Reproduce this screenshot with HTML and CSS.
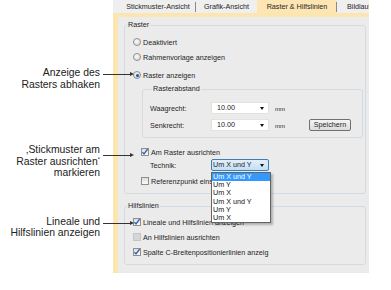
FILE: index.html
```html
<!DOCTYPE html>
<html lang="de">
<head>
    <meta charset="UTF-8">
    <meta name="viewport" content="width=device-width, initial-scale=1.0">
    <title>Raster &amp; Hilfslinien</title>
    <link rel="stylesheet" href="styles.css">
</head>
<body>
    <div class="figure">
        <!-- Beschriftungen links -->
        <div class="notes">
            <p class="note note-grid">Anzeige des<br>Rasters abhaken<span class="arrow"></span></p>
            <p class="note note-snap">‚Stickmuster am<br>Raster ausrichten‘<br>markieren<span class="arrow"></span></p>
            <p class="note note-guides">Lineale und<br>Hilfslinien anzeigen<span class="arrow"></span></p>
        </div>

        <div class="dialog">
            <div class="tabs">
                <div class="tab tab-design">Stickmuster-Ansicht</div>
                <div class="tab tab-art">Grafik-Ansicht</div>
                <div class="tab tab-grid active">Raster &amp; Hilfslinien</div>
                <div class="tab tab-scroll">Bildlauf</div>
            </div>

            <div class="page">
                <fieldset class="group group-raster">
                    <legend>Raster</legend>
                    <div class="row opt first"><span class="radio"></span>Deaktiviert</div>
                    <div class="row opt second"><span class="radio"></span>Rahmenvorlage anzeigen</div>
                    <div class="row opt third"><span class="radio on"></span>Raster anzeigen</div>

                    <fieldset class="group group-spacing">
                        <legend>Rasterabstand</legend>
                        <div class="field first">
                            <span class="field-label">Waagrecht:</span>
                            <span class="input">10.00<span class="caret"></span></span>
                            <span class="unit">mm</span>
                        </div>
                        <div class="field second">
                            <span class="field-label">Senkrecht:</span>
                            <span class="input">10.00<span class="caret"></span></span>
                            <span class="unit">mm</span>
                            <span class="button">Speichern</span>
                        </div>
                    </fieldset>

                    <div class="row snap"><span class="check on"><svg width="8" height="8" viewBox="0 0 8 8"><polyline points="1.4,4.2 3,6 6.6,1.2" fill="none" stroke="#2c5fae" stroke-width="1.3"/></svg></span>Am Raster ausrichten</div>
                    <div class="field technik">
                        <span class="field-label">Technik:</span>
                        <span class="combo">Um X und Y<span class="caret"></span>
                            <span class="list">
                                <span class="item selected">Um X und Y</span>
                                <span class="item">Um Y</span>
                                <span class="item">Um X</span>
                                <span class="item">Um X und Y</span>
                                <span class="item">Um Y</span>
                                <span class="item">Um X</span>
                            </span>
                        </span>
                    </div>
                    <div class="row snap ref"><span class="check"></span><span class="clipped">Referenzpunkt einstellen</span></div>
                </fieldset>

                <fieldset class="group group-guides">
                    <legend>Hilfslinien</legend>
                    <div class="row opt first2"><span class="check on"><svg width="8" height="8" viewBox="0 0 8 8"><polyline points="1.4,4.2 3,6 6.6,1.2" fill="none" stroke="#2c5fae" stroke-width="1.3"/></svg></span>Lineale und Hilfslinien anzeigen</div>
                    <div class="row opt second"><span class="check off"></span>An Hilfslinien ausrichten</div>
                    <div class="row opt second"><span class="check on"><svg width="8" height="8" viewBox="0 0 8 8"><polyline points="1.4,4.2 3,6 6.6,1.2" fill="none" stroke="#2c5fae" stroke-width="1.3"/></svg></span>Spalte C-Breitenpositionierlinien anzeig</div>
                </fieldset>
            </div>
        </div>
    </div>
</body>
</html>
```

FILE: styles.css
```css
* {
    margin: 0;
    padding: 0;
    box-sizing: border-box;
}
body {
    background: white;
    width: 391px;
    height: 290px;
    overflow: hidden;
}
.figure {
    display: flex;
    align-items: flex-start;
}
/* Beschriftungen */
.notes {
    width: 113px;
    flex-shrink: 0;
    padding-top: 67px;
    position: relative;
    z-index: 2;
}
.note {
    position: relative;
    text-align: right;
    padding-right: 13px;
    font-family: "Liberation Sans", Arial, sans-serif;
    font-size: 10.4px;
    line-height: 11.5px;
    color: #222;
}
.note-snap {
    margin-top: 54px;
}
.note-guides {
    margin-top: 37px;
}
.arrow {
    position: absolute;
    left: 103px;
    top: 7px;
    width: 27px;
    height: 1px;
    background: #333;
}
.arrow::after {
    content: "";
    position: absolute;
    right: -4px;
    top: -2px;
    border-left: 4px solid #333;
    border-top: 2.5px solid transparent;
    border-bottom: 2.5px solid transparent;
}
.note-snap .arrow {
    top: 11px;
}
/* Dialog */
.dialog {
    width: 256px;
    height: 273px;
    font-family: "Liberation Sans", Arial, sans-serif;
    font-size: 7.2px;
    color: #1e1e1e;
    display: flex;
    flex-direction: column;
}
.tabs {
    display: flex;
    height: 13px;
    background: #efefef;
}
.tab {
    position: relative;
    line-height: 13px;
    text-align: center;
    white-space: nowrap;
    overflow: hidden;
}
.tab-design {
    width: 83px;
    padding-left: 7px;
}
.tab-art {
    width: 61px;
}
.tab-grid {
    width: 80px;
}
.tab-scroll {
    width: 32px;
    padding-left: 10px;
    text-align: left;
}
.tab-design::after,
.tab-grid::after {
    content: "";
    position: absolute;
    right: 0;
    top: 2px;
    height: 10px;
    width: 1px;
    background: #8a8a8a;
}
.tab.active {
    background: #fde6b3;
}
.page {
    flex: 1;
    background: #ebebeb;
    border-left: 5px solid #fbe5b1;
    border-top: 4px solid #fbe5b1;
    padding-top: 4px;
}
.group {
    border: 1px solid #d3dbe0;
    border-radius: 3px;
    min-width: 0;
}
.group legend {
    margin-left: 2px;
    padding: 0 1px;
    line-height: 8px;
}
.group-raster {
    margin-left: 6px;
    width: 242px;
    padding-bottom: 7px;
}
.group-spacing {
    margin: 5px 0 0 17px;
    width: 221px;
    padding: 0 0 6px 7px;
}
.group-guides {
    margin: 8px 0 0 6px;
    width: 242px;
    padding-bottom: 7px;
}
.row {
    display: flex;
    align-items: center;
    height: 10px;
    white-space: nowrap;
}
.opt {
    padding-left: 8px;
    margin-top: 5px;
}
.opt.first {
    margin-top: 8px;
}
.opt.third {
    margin-top: 8px;
}
.opt.first2 {
    margin-top: 7px;
}
.radio {
    width: 8px;
    height: 8px;
    border-radius: 50%;
    border: 1px solid #8e8f8f;
    background: radial-gradient(circle at 40% 35%, #fafafa, #d4d4d4);
    margin-right: 2px;
    position: relative;
}
.radio.on::after {
    content: "";
    position: absolute;
    left: 1.5px;
    top: 1.5px;
    width: 3px;
    height: 3px;
    border-radius: 50%;
    background: #1d64b4;
    box-shadow: 0 0 1px #6aa7e6;
}
.check {
    width: 8px;
    height: 8px;
    border: 1px solid #8e8f8f;
    background: linear-gradient(#dcdcdc, #fbfbfb);
    margin-right: 2px;
    display: flex;
    align-items: center;
    justify-content: center;
}
.check svg {
    display: block;
    flex-shrink: 0;
}
.check.off {
    background: #d6d6d6;
    border-color: #c4c4c4;
}
.snap {
    margin: 9px 0 0 16px;
}
.snap.ref {
    margin-top: 5px;
}
.clipped {
    width: 60px;
    overflow: hidden;
}
.field {
    display: flex;
    align-items: center;
    height: 12px;
}
.field.first {
    margin-top: 9px;
}
.field.second {
    margin-top: 5px;
}
.field.technik {
    margin: 2px 0 0 25px;
}
.field-label {
    width: 61px;
}
.input,
.combo {
    position: relative;
    width: 58px;
    height: 12px;
    line-height: 10px;
    background: white;
    border: 1px solid #e2e2e2;
    padding-left: 5px;
}
.caret {
    position: absolute;
    right: 4px;
    top: 4px;
    border-top: 3px solid #111;
    border-left: 2.5px solid transparent;
    border-right: 2.5px solid transparent;
}
.unit {
    margin-left: 6px;
    width: 34px;
    font-size: 6px;
    padding-top: 2px;
}
.button {
    width: 42px;
    height: 12px;
    line-height: 10px;
    text-align: center;
    border: 1px solid #707070;
    border-radius: 2px;
    background: linear-gradient(#f4f4f4, #dcdcdc);
}
.combo {
    border-color: #3c7fb1;
    border-radius: 2px;
    background: linear-gradient(#e3f0fb, #c4def5);
    padding-left: 1px;
    z-index: 3;
}
.list {
    position: absolute;
    top: 12px;
    left: -1px;
    width: 60px;
    background: white;
    border: 1px solid #646464;
    box-shadow: 2px 2px 2px rgba(0, 0, 0, 0.25);
    display: flex;
    flex-direction: column;
}
.item {
    line-height: 8.2px;
    padding-left: 1px;
    color: #111;
}
.item.selected {
    background: #3399ff;
    color: white;
}
```
